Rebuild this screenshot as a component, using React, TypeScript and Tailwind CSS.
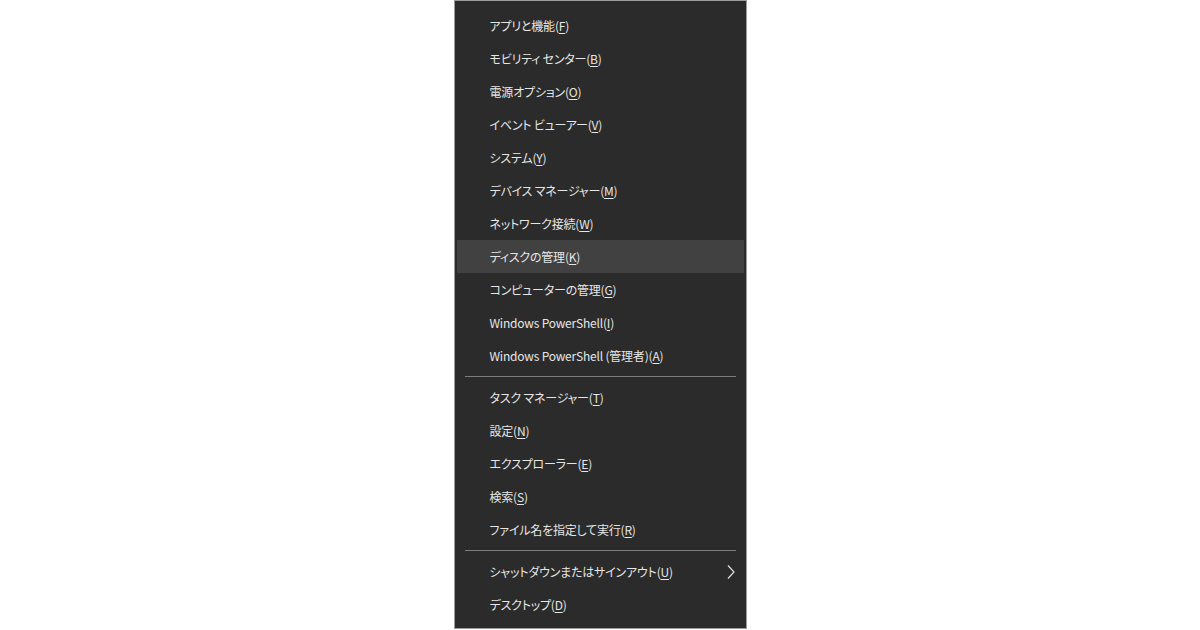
type Item = { label: string; key: string; sub?: boolean };

const groups: Item[][] = [
  [
    { label: "アプリと機能", key: "F" },
    { label: "モビリティ センター", key: "B" },
    { label: "電源オプション", key: "O" },
    { label: "イベント ビューアー", key: "V" },
    { label: "システム", key: "Y" },
    { label: "デバイス マネージャー", key: "M" },
    { label: "ネットワーク接続", key: "W" },
    { label: "ディスクの管理", key: "K" },
    { label: "コンピューターの管理", key: "G" },
    { label: "Windows PowerShell", key: "I" },
    { label: "Windows PowerShell (管理者)", key: "A" },
  ],
  [
    { label: "タスク マネージャー", key: "T" },
    { label: "設定", key: "N" },
    { label: "エクスプローラー", key: "E" },
    { label: "検索", key: "S" },
    { label: "ファイル名を指定して実行", key: "R" },
  ],
  [
    { label: "シャットダウンまたはサインアウト", key: "U", sub: true },
    { label: "デスクトップ", key: "D" },
  ],
];

function MenuRow({ item, active }: { item: Item; active?: boolean }) {
  return (
    <div
      className={`mx-[2px] flex h-[33px] items-center justify-between pl-[33px] pr-[8px] ${
        active ? "bg-[#414141]" : ""
      }`}
    >
      <span className="text-[12px] tracking-[-0.2px] text-[#e6e6e6] [font-feature-settings:'palt']">
        {item.label}(<span className="underline underline-offset-2">{item.key}</span>)
      </span>
      {item.sub && (
        <svg width="10" height="16" viewBox="0 0 10 16" className="text-[#e0e0e0]">
          <path d="M2 1.5 L8 8 L2 14.5" fill="none" stroke="currentColor" strokeWidth="1.2" />
        </svg>
      )}
    </div>
  );
}

export default function App() {
  return (
    <div
      className="flex h-[630px] w-[1200px] justify-center bg-white"
      style={{ fontFamily: '"Noto Sans CJK JP", "Noto Sans", sans-serif' }}
    >
      <div className="h-[629px] w-[293px] border border-[#9c9c9c] bg-[#2b2b2b] pt-[8px] pb-[7px]">
        {groups.map((g, gi) => (
          <div key={gi}>
            {gi > 0 && (
              <div className="flex h-[9px] items-center px-[10px]">
                <div className="h-px w-full bg-[#7c7c7c]" />
              </div>
            )}
            {g.map((item) => (
              <MenuRow key={item.key} item={item} active={item.key === "K"} />
            ))}
          </div>
        ))}
      </div>
    </div>
  );
}
